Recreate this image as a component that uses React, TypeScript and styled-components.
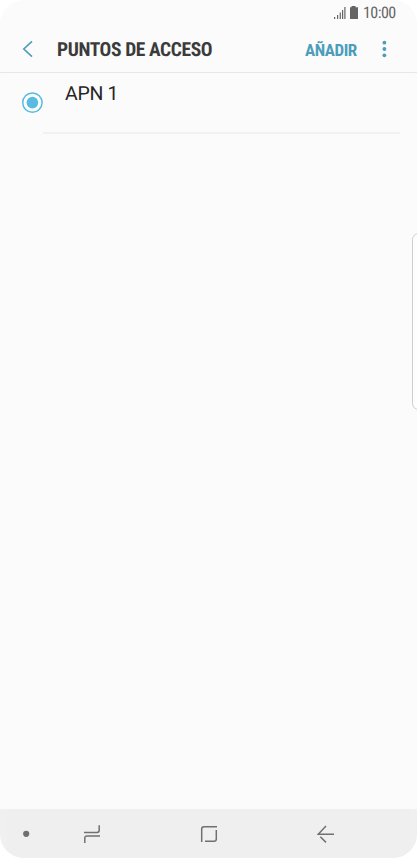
import React from "react";
import styled, { createGlobalStyle } from "styled-components";

const GlobalStyle = createGlobalStyle`
  * { box-sizing: border-box; }
  body { margin: 0; background: #fff; }
`;

const Phone = styled.div`
  position: relative;
  display: flex;
  flex-direction: column;
  width: 417px;
  height: 858px;
  overflow: hidden;
  border-radius: 24px;
  background: #fbfbfb;
  color: #252525;
  font-family: Roboto, sans-serif;
  text-rendering: geometricPrecision;
`;

const StatusBar = styled.div`
  display: flex;
  align-items: center;
  justify-content: flex-end;
  height: 26px;
  padding-right: 21px;
  color: #646464;
`;

const Condensed = styled.span<{ $size: number; $weight: number; $tracking?: number }>`
  font-family: "Roboto Condensed", Roboto, sans-serif;
  font-stretch: 75%;
  font-size: ${(p) => p.$size}px;
  font-weight: ${(p) => p.$weight};
  letter-spacing: ${(p) => p.$tracking ?? 0}px;
  line-height: 24px;
  white-space: nowrap;
`;

const Clock = styled(Condensed)`
  width: 33px;
  margin-left: 4px;
`;

const Header = styled.header`
  display: flex;
  align-items: center;
  height: 47px;
  padding-left: 22px;
  border-bottom: 1px solid #e6e6e6;
`;

const Title = styled(Condensed)`
  flex: 1;
  margin: 1px 0 0 23px;
  color: #3b3b3b;
`;

const AddButton = styled.button`
  display: flex;
  width: 52px;
  margin-top: 1px;
  padding: 0;
  border: 0;
  background: none;
  color: #4c9dba;
`;

const MenuButton = styled.button`
  display: flex;
  width: 12px;
  margin: 0 27px 0 21px;
  padding: 0;
  border: 0;
  background: none;
`;

const List = styled.main`
  flex: 1;
`;

const Row = styled.div`
  display: flex;
  height: 59px;
  padding-left: 21px;
`;

const RadioIcon = styled.svg`
  margin-top: 18px;
`;

const RowLabel = styled.span`
  margin: 9px 0 0 21px;
  font-size: 19.5px;
  letter-spacing: -0.3px;
  line-height: 24px;
`;

const Divider = styled.div`
  height: 2px;
  margin: 0 17px 0 43px;
  background: #f1f1f1;
`;

const EdgeHandle = styled.div`
  position: absolute;
  top: 233px;
  right: -8px;
  width: 13px;
  height: 177px;
  border: 1px solid #c9c9c9;
  border-radius: 7px;
  background: #fdfdfd;
`;

const EdgeShade = styled.div<{ $side: "left" | "right" }>`
  position: absolute;
  top: 0;
  bottom: 0;
  ${(p) => p.$side}: 0;
  width: 7px;
  background: rgba(255, 255, 255, 0.1);
  pointer-events: none;
`;

const NavBar = styled.nav`
  display: flex;
  align-items: center;
  height: 49px;
  padding-left: 22px;
  background: #efefef;
`;

const NavIcon = styled.svg<{ $gap: number }>`
  flex: none;
  margin-left: ${(p) => p.$gap}px;
  fill: none;
  stroke: #707070;
  stroke-width: 1.5;
`;

export default function App() {
  return (
    <>
      <GlobalStyle />
      <Phone>
        <StatusBar>
          <svg width="26" height="14" viewBox="0 0 26 14" fill="currentColor">
            <path d="M1 11h1.2v2H1zM4 9h1.2v4H4zM6.7 6.5h1.2V13H6.7zM9 4h1.2v9H9zM11.3 1h1.2v12h-1.2z" />
            <path d="M18.5 0h4v1.3H25V13h-8V1.3h1.5z" />
          </svg>
          <Clock $size={16} $weight={400} $tracking={-0.55}>10:00</Clock>
        </StatusBar>
        <Header>
          <svg width="12" height="18" viewBox="0 0 12 18" fill="none" stroke="#4c9dba" strokeWidth="1.6">
            <path d="M10 1.3 1.8 9l8.2 7.7" />
          </svg>
          <Title as="h1" $size={19.5} $weight={700} $tracking={-0.4}>PUNTOS DE ACCESO</Title>
          <AddButton>
            <Condensed $size={17} $weight={700} $tracking={-0.45}>AÑADIR</Condensed>
          </AddButton>
          <MenuButton aria-label="Más opciones">
            <svg width="12" height="18" viewBox="0 0 12 18" fill="#4c9dba">
              <circle cx="6.4" cy="2.7" r="1.9" />
              <circle cx="6.4" cy="9" r="1.9" />
              <circle cx="6.4" cy="15.3" r="1.9" />
            </svg>
          </MenuButton>
        </Header>
        <List>
          <Row>
            <RadioIcon width="23" height="23" viewBox="0 0 23 23">
              <circle cx="11.4" cy="11.6" r="9.7" fill="none" stroke="#58bbdf" strokeWidth="1.5" />
              <circle cx="11.4" cy="11.6" r="5.8" fill="#58bbdf" />
            </RadioIcon>
            <RowLabel>APN 1</RowLabel>
          </Row>
          <Divider />
        </List>
        <NavBar>
          <NavIcon $gap={0} width="8" height="8" viewBox="0 0 8 8">
            <circle cx="4.2" cy="3.8" r="3.1" fill="#707070" stroke="none" />
          </NavIcon>
          <NavIcon $gap={53} width="18" height="20" viewBox="0 0 18 20">
            <path d="M1 8.5h13q2.2 0 2.2-2.2V1.3M17 12H4q-2.2 0-2.2 2.2V19" />
          </NavIcon>
          <NavIcon $gap={99} width="18" height="18" viewBox="0 0 18 18">
            <path d="M1.7 17V4q0-2.3 2.3-2.3h13M16.3 5v9q0 2.3-2.3 2.3H5" />
          </NavIcon>
          <NavIcon $gap={99} width="18" height="18" viewBox="0 0 18 18">
            <path d="M17 9.3H1.2L9 1M3.3 11.8 9 17.4" />
          </NavIcon>
        </NavBar>
        <EdgeHandle />
        <EdgeShade $side="left" />
        <EdgeShade $side="right" />
      </Phone>
    </>
  );
}
